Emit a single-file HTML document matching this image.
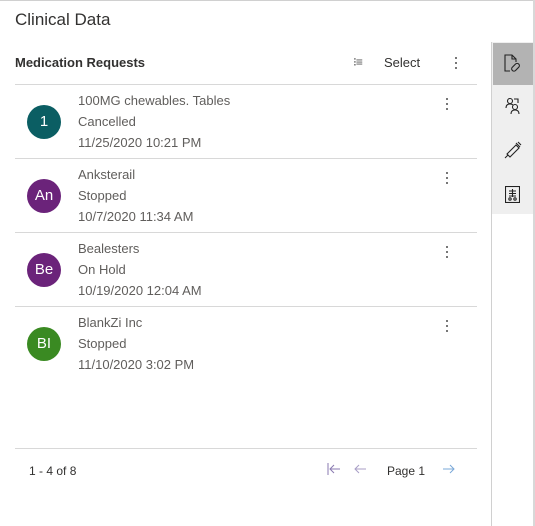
<!DOCTYPE html>
<html><head><style>
*{margin:0;padding:0;box-sizing:border-box}
body{width:535px;height:526px;background:#fff;font-family:"Liberation Sans",sans-serif;position:relative;overflow:hidden;color:#323130}
.a{position:absolute}
.title{left:15px;top:10px;font-size:17px;color:#323130}
.hdr{left:15px;top:55px;font-size:13px;font-weight:600;color:#323130}
.line{height:1px;background:#d8d8d8;left:15px;width:462px}
.av{width:34px;height:34px;border-radius:50%;color:#fff;font-size:15px;text-align:center;line-height:34px;left:27px}
.t{left:78px;font-size:13px;color:#605e5c}
.dots{left:446px;width:3px}
.dots i{display:block;width:1.5px;height:1.5px;background:#777;margin-bottom:3.5px}
</style></head><body>
<div class="a" style="left:0;top:0;width:535px;height:1px;background:#d0d0d0"></div>
<div class="a" style="left:533px;top:0;width:2px;height:526px;background:#d8d8d8"></div>
<div class="a title">Clinical Data</div>
<div class="a hdr">Medication Requests</div>
<div class="a" style="left:353px;top:55px;font-size:12px;color:#555;letter-spacing:-1px">⁝≡</div>
<div class="a" style="left:384px;top:55px;font-size:13px">Select</div>
<div class="a dots" style="top:57px;left:455px"><i></i><i></i><i></i></div>
<div class="a" style="left:491px;top:42px;width:1px;height:484px;background:#d0d0d0"></div>
<div class="a" style="left:492px;top:42px;width:41px;height:172px;background:#efefef"></div>
<div class="a" style="left:493px;top:43px;width:40px;height:42px;background:#b3b3b3"></div>
<svg class="a" style="left:504px;top:54px" width="18" height="20" viewBox="0 0 18 20" fill="none" stroke="#222" stroke-width="1.1"><path d="M6 17H1V1h7l4 4v3"/><path d="M8 1v4h4"/><rect x="7" y="11" width="9" height="4.5" rx="2.2" transform="rotate(-45 11.5 13.2)"/></svg>
<svg class="a" style="left:505px;top:97px" width="16" height="18" viewBox="0 0 16 18" fill="none" stroke="#222" stroke-width="1.1"><circle cx="5" cy="4" r="2.5"/><path d="M1 11c0-3 2-4 4-4s3 1 3 1"/><path d="M9 2h4v4"/><circle cx="10" cy="10" r="2.5"/><path d="M6 17c0-3 2-4 4-4s4 1 4 4"/></svg>
<svg class="a" style="left:504px;top:141px" width="18" height="18" viewBox="0 0 18 18" fill="none" stroke="#222" stroke-width="1.1"><path d="M1 17l3-3"/><path d="M4 14l-1-1 9-9 3 3-9 9z"/><path d="M12 2l4 4M14 1l3 3"/></svg>
<svg class="a" style="left:505px;top:186px" width="15" height="17" viewBox="0 0 15 17" fill="none" stroke="#222" stroke-width="1.1"><rect x="0.5" y="0.5" width="14" height="16"/><path d="M7.5 3v8M4 5h7M4 7.5h7M4 10h7"/><circle cx="5" cy="13" r="1.2"/><circle cx="10" cy="13" r="1.2"/></svg>
<div class="a line" style="top:84px"></div>
<div class="a line" style="top:158px"></div>
<div class="a line" style="top:232px"></div>
<div class="a line" style="top:306px"></div>
<div class="a line" style="top:448px"></div>
<div class="a av" style="top:105px;background:#0b5e63">1</div>
<div class="a t" style="top:93px">100MG chewables. Tables</div>
<div class="a t" style="top:114px">Cancelled</div>
<div class="a t" style="top:135px">11/25/2020 10:21 PM</div>
<div class="a dots" style="top:98px"><i></i><i></i><i></i></div>
<div class="a av" style="top:179px;background:#6b237a">An</div>
<div class="a t" style="top:167px">Anksterail</div>
<div class="a t" style="top:188px">Stopped</div>
<div class="a t" style="top:209px">10/7/2020 11:34 AM</div>
<div class="a dots" style="top:172px"><i></i><i></i><i></i></div>
<div class="a av" style="top:253px;background:#6b237a">Be</div>
<div class="a t" style="top:241px">Bealesters</div>
<div class="a t" style="top:262px">On Hold</div>
<div class="a t" style="top:283px">10/19/2020 12:04 AM</div>
<div class="a dots" style="top:246px"><i></i><i></i><i></i></div>
<div class="a av" style="top:327px;background:#3a8a22">BI</div>
<div class="a t" style="top:315px">BlankZi Inc</div>
<div class="a t" style="top:336px">Stopped</div>
<div class="a t" style="top:357px">11/10/2020 3:02 PM</div>
<div class="a dots" style="top:320px"><i></i><i></i><i></i></div>
<div class="a" style="left:29px;top:464px;font-size:12px">1 - 4 of 8</div>
<svg class="a" style="left:327px;top:463px" width="14" height="12" viewBox="0 0 14 12" fill="none" stroke="#8a7ab0" stroke-width="1"><path d="M1 0v12M13 6H3M7 2L3 6l4 4"/></svg>
<svg class="a" style="left:353px;top:463px" width="13" height="12" viewBox="0 0 13 12" fill="none" stroke="#a89ec6" stroke-width="1"><path d="M13 6H2M6 2L2 6l4 4"/></svg>
<div class="a" style="left:387px;top:464px;font-size:12px">Page 1</div>
<svg class="a" style="left:443px;top:463px" width="13" height="12" viewBox="0 0 13 12" fill="none" stroke="#7aa8d8" stroke-width="1"><path d="M0 6h11M7 2l4 4-4 4"/></svg>
</body></html>
